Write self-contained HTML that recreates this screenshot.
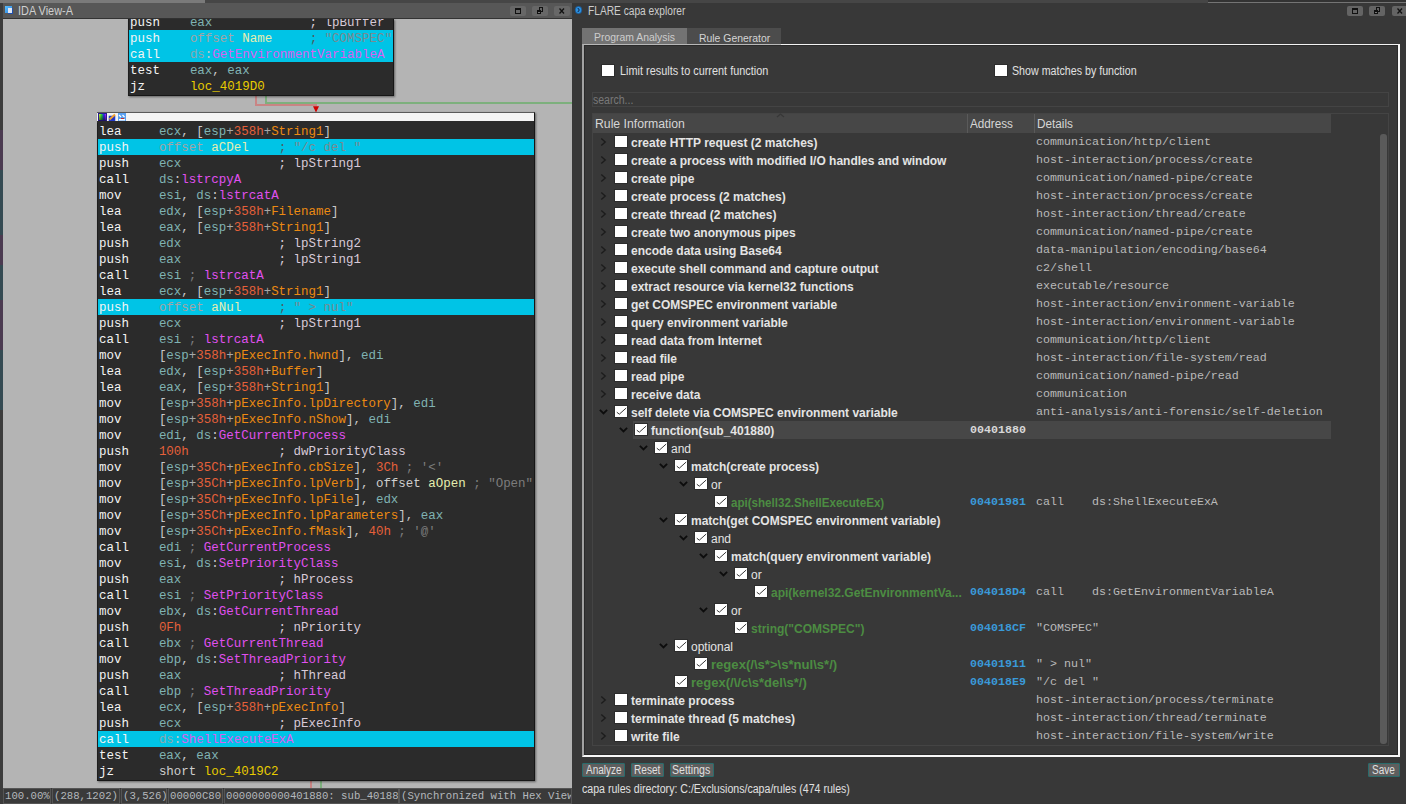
<!DOCTYPE html>
<html><head><meta charset="utf-8"><title>IDA capa explorer</title>
<style>
*{margin:0;padding:0;box-sizing:border-box}
html,body{width:1406px;height:804px;overflow:hidden;background:#3a3a3a;position:relative}
body{font-family:"Liberation Sans",sans-serif}
.abs{position:absolute}
.mono{font-family:"Liberation Mono",monospace}
.code{border-left:1px solid #1e1e1e;position:absolute;font-family:"Liberation Mono",monospace;font-size:12.47px;line-height:16px;white-space:pre;background:#2b2b2b;overflow:hidden}
.code .r{height:16px;padding-left:1px;padding-top:3px;line-height:13px}
.code .r.hl{background:#00c4e6}
.ar{position:absolute;line-height:0}
.cb{position:absolute;width:12px;height:11px;line-height:0;box-shadow:0 0 0 1px #2c2c2c}
.ub{background:#fff}
.tb,.tn,.tg{position:absolute;font-size:12px;line-height:18px;white-space:pre;height:18px;padding-top:1px}
.tb{font-weight:bold;color:#e4e4e4}
.tn{color:#e4e4e4}
.tg{font-weight:bold;color:#4c8c42}
.ad{position:absolute;left:970px;font-family:"Liberation Mono",monospace;font-size:11.67px;line-height:18px;font-weight:bold;white-space:pre}
.aw{color:#d8d8d8}
.ab{color:#3a9ad9}
.dt{position:absolute;left:1036px;font-family:"Liberation Mono",monospace;font-size:11.67px;line-height:18px;color:#bababa;white-space:pre}
.sb{position:absolute;top:788px;height:16px;font-family:"Liberation Mono",monospace;font-size:10.67px;line-height:15px;color:#b4b8bc;white-space:pre;border:1px solid #555;overflow:hidden;padding-left:1px}
.btn{position:absolute;top:763px;height:14px;border:1px solid #2a6c6c;background:#5e5e5e;border-radius:1px}
.lab{height:14px;font-size:12px;line-height:14px;white-space:pre;transform-origin:0 0}
.tbtn{position:absolute;top:6px;width:16px;height:10px;background:#676767;border-radius:2px}
</style></head>
<body>

<!-- top strip -->
<div class="abs" style="left:0;top:0;width:1406px;height:3px;background:#464646"></div>
<div class="abs" style="left:0;top:0;width:205px;height:3px;background:#7a7a7a"></div>
<div class="abs" style="left:1208px;top:0;width:198px;height:3px;background:#333"></div><div class="abs" style="left:1208px;top:2px;width:198px;height:1px;background:#747474"></div>

<!-- IDA window -->
<div class="abs" style="left:0;top:3px;width:3px;height:801px;background:#3c3c3c"></div>
<div class="abs" style="left:0;top:130px;width:3px;height:40px;background:#4b3a50"></div>
<div class="abs" style="left:0;top:170px;width:3px;height:65px;background:#344a52"></div>
<div class="abs" style="left:0;top:235px;width:3px;height:30px;background:#4b3a50"></div>
<div class="abs" style="left:0;top:265px;width:3px;height:35px;background:#344a52"></div>
<div class="abs" style="left:0;top:300px;width:3px;height:50px;background:#4b3a50"></div>
<div class="abs" style="left:0;top:350px;width:3px;height:60px;background:#344a52"></div>
<div class="abs" style="left:3px;top:3px;width:569px;height:16px;background:#575757"></div>
<div class="abs" style="left:3px;top:18px;width:569px;height:1px;background:#333"></div>
<div class="abs" style="left:5px;top:6px;width:7px;height:7px;background:linear-gradient(135deg,#5ac0ff,#2a80e0)"></div><div class="abs" style="left:8px;top:8px;width:5px;height:6px;background:#dfe8f4;border-right:1px solid #2050b0;border-bottom:1px solid #2050b0"></div>
<div class="abs lab" style="left:18.4px;top:4px;color:#d0d0d0;font-size:12px;transform:scaleX(0.9080);">IDA View-A</div>
<div class="tbtn" style="left:510px"><svg width="16" height="10" style="display:block"><rect x="5.5" y="2.5" width="5" height="5" fill="none" stroke="#111" stroke-width="1"/><rect x="5" y="2" width="6" height="2" fill="#111"/></svg></div>
<div class="tbtn" style="left:532px"><svg width="16" height="10" style="display:block"><rect x="7.5" y="1.5" width="3" height="4" fill="none" stroke="#111" stroke-width="1"/><rect x="5" y="4" width="4" height="4" fill="#111"/><rect x="6" y="6" width="2" height="1" fill="#777"/></svg></div>
<div class="tbtn" style="left:554px"><svg width="16" height="10" style="display:block"><path d="M5.5 2.5 L10 7.5 M10 2.5 L5.5 7.5" stroke="#111" stroke-width="1.3"/></svg></div>

<div class="abs" style="left:3px;top:19px;width:569px;height:769px;background:#b4b4b4;overflow:hidden">
</div>
<!-- edges -->
<div class="abs" style="left:255px;top:95px;width:2px;height:10px;background:#c98484"></div>
<div class="abs" style="left:255px;top:104px;width:62px;height:2px;background:#c98484"></div>
<div class="abs" style="left:265px;top:95px;width:2px;height:8px;background:#7db07d"></div>
<div class="abs" style="left:265px;top:102px;width:307px;height:2px;background:#7db07d"></div>
<svg class="abs" style="left:313px;top:105px" width="6" height="8"><path d="M0 1.2 L6 1.2 L3 7.5 Z" fill="#d00000"/></svg>
<div class="abs" style="left:310px;top:781px;width:2px;height:7px;background:#c98484"></div>
<div class="abs" style="left:320px;top:781px;width:2px;height:7px;background:#7db07d"></div>

<!-- upper block -->
<div class="code" style="left:128px;top:19px;width:266px;height:77px;border-right:1px solid #161616;border-bottom:1px solid #161616;box-shadow:1px 1px 2px rgba(0,0,0,0.45)"><div style="position:absolute;left:0;top:-5px;width:265px"><div class="r"><span style="color:#f4f4f4">push</span>    <span style="color:#80b3b3">eax</span>             <span style="color:#d8cad8">; lpBuffer</span></div><div class="r hl"><span style="color:#f4f4f4">push</span>    <span style="color:#a4a4a4">offset </span><span style="color:#e6eeb0">Name</span>     <span style="color:#4a5a60">; </span><span style="color:#7a8a90">"COMSPEC"</span></div><div class="r hl"><span style="color:#f4f4f4">call</span>    <span style="color:#8aa8b0">ds</span><span style="color:#c8c8c8">:</span><span style="color:#d860f0">GetEnvironmentVariableA</span></div><div class="r"><span style="color:#f4f4f4">test</span>    <span style="color:#80b3b3">eax</span><span style="color:#c8c8c8">, </span><span style="color:#80b3b3">eax</span></div><div class="r"><span style="color:#f4f4f4">jz</span>      <span style="color:#e8cc00">loc_4019D0</span></div></div></div>

<!-- lower block -->
<div class="abs" style="left:97px;top:112px;width:438px;height:669px;background:#2b2b2b;border-top:1px solid #5a5a5a;border-right:1px solid #161616;border-bottom:1px solid #161616;box-shadow:1px 1px 2px rgba(0,0,0,0.45)"></div>
<div class="abs" style="left:97px;top:113px;width:437px;height:8px;background:#f4f4f4"></div>
<svg class="abs" style="left:98px;top:113px" width="30" height="8">
<defs><linearGradient id="sp" x1="0" x2="1" y1="0" y2="0"><stop offset="0" stop-color="#ffff40"/><stop offset="0.35" stop-color="#30e030"/><stop offset="0.7" stop-color="#2020ff"/><stop offset="1" stop-color="#ff30ff"/></linearGradient>
<linearGradient id="dk" x1="0" x2="0" y1="0" y2="1"><stop offset="0" stop-color="#000" stop-opacity="0"/><stop offset="1" stop-color="#000" stop-opacity="0.55"/></linearGradient></defs>
<rect x="0.5" y="0.5" width="8" height="7" fill="url(#sp)" stroke="#2a1a90" stroke-width="1"/><rect x="1" y="1" width="7" height="6.5" fill="url(#dk)"/>
<rect x="11" y="3" width="6" height="5" fill="#1f30c8" stroke="#3050d0" stroke-width="0.6"/><path d="M11.5 6.5 L17 1.5" stroke="#f0a030" stroke-width="2"/>
<rect x="20" y="0" width="8" height="8" fill="#5aa0f0"/><path d="M21 2 L23 4 M24.5 2 L26.5 4" stroke="#fff" stroke-width="1.2"/><rect x="21" y="6" width="6" height="1.5" fill="#fff"/><rect x="23" y="5" width="3" height="1" fill="#c03030"/>
</svg>
<div class="code" style="left:97px;top:123px;width:437px;height:657px"><div class="r"><span style="color:#f4f4f4">lea</span>     <span style="color:#80b3b3">ecx</span><span style="color:#c8c8c8">, </span><span style="color:#c8c8c8">[</span><span style="color:#80b3b3">esp</span><span style="color:#a8a8a8">+</span><span style="color:#e5603a">358h</span><span style="color:#a8a8a8">+</span><span style="color:#ec8a12">String1</span><span style="color:#c8c8c8">]</span></div><div class="r hl"><span style="color:#f4f4f4">push</span>    <span style="color:#a4a4a4">offset </span><span style="color:#e6eeb0">aCDel</span>    <span style="color:#4a5a60">; </span><span style="color:#7a8a90">"/c del "</span></div><div class="r"><span style="color:#f4f4f4">push</span>    <span style="color:#80b3b3">ecx</span>             <span style="color:#d8cad8">; lpString1</span></div><div class="r"><span style="color:#f4f4f4">call</span>    <span style="color:#80b3b3">ds</span><span style="color:#c8c8c8">:</span><span style="color:#e050f0">lstrcpyA</span></div><div class="r"><span style="color:#f4f4f4">mov</span>     <span style="color:#80b3b3">esi</span><span style="color:#c8c8c8">, </span><span style="color:#80b3b3">ds</span><span style="color:#c8c8c8">:</span><span style="color:#e050f0">lstrcatA</span></div><div class="r"><span style="color:#f4f4f4">lea</span>     <span style="color:#80b3b3">edx</span><span style="color:#c8c8c8">, </span><span style="color:#c8c8c8">[</span><span style="color:#80b3b3">esp</span><span style="color:#a8a8a8">+</span><span style="color:#e5603a">358h</span><span style="color:#a8a8a8">+</span><span style="color:#ec8a12">Filename</span><span style="color:#c8c8c8">]</span></div><div class="r"><span style="color:#f4f4f4">lea</span>     <span style="color:#80b3b3">eax</span><span style="color:#c8c8c8">, </span><span style="color:#c8c8c8">[</span><span style="color:#80b3b3">esp</span><span style="color:#a8a8a8">+</span><span style="color:#e5603a">358h</span><span style="color:#a8a8a8">+</span><span style="color:#ec8a12">String1</span><span style="color:#c8c8c8">]</span></div><div class="r"><span style="color:#f4f4f4">push</span>    <span style="color:#80b3b3">edx</span>             <span style="color:#d8cad8">; lpString2</span></div><div class="r"><span style="color:#f4f4f4">push</span>    <span style="color:#80b3b3">eax</span>             <span style="color:#d8cad8">; lpString1</span></div><div class="r"><span style="color:#f4f4f4">call</span>    <span style="color:#80b3b3">esi</span><span style="color:#7c7c7c"> ; </span><span style="color:#e050f0">lstrcatA</span></div><div class="r"><span style="color:#f4f4f4">lea</span>     <span style="color:#80b3b3">ecx</span><span style="color:#c8c8c8">, </span><span style="color:#c8c8c8">[</span><span style="color:#80b3b3">esp</span><span style="color:#a8a8a8">+</span><span style="color:#e5603a">358h</span><span style="color:#a8a8a8">+</span><span style="color:#ec8a12">String1</span><span style="color:#c8c8c8">]</span></div><div class="r hl"><span style="color:#f4f4f4">push</span>    <span style="color:#a4a4a4">offset </span><span style="color:#e6eeb0">aNul</span>     <span style="color:#4a5a60">; </span><span style="color:#7a8a90">" &gt; nul"</span></div><div class="r"><span style="color:#f4f4f4">push</span>    <span style="color:#80b3b3">ecx</span>             <span style="color:#d8cad8">; lpString1</span></div><div class="r"><span style="color:#f4f4f4">call</span>    <span style="color:#80b3b3">esi</span><span style="color:#7c7c7c"> ; </span><span style="color:#e050f0">lstrcatA</span></div><div class="r"><span style="color:#f4f4f4">mov</span>     <span style="color:#c8c8c8">[</span><span style="color:#80b3b3">esp</span><span style="color:#a8a8a8">+</span><span style="color:#e5603a">358h</span><span style="color:#a8a8a8">+</span><span style="color:#ec8a12">pExecInfo.hwnd</span><span style="color:#c8c8c8">]</span><span style="color:#c8c8c8">, </span><span style="color:#80b3b3">edi</span></div><div class="r"><span style="color:#f4f4f4">lea</span>     <span style="color:#80b3b3">edx</span><span style="color:#c8c8c8">, </span><span style="color:#c8c8c8">[</span><span style="color:#80b3b3">esp</span><span style="color:#a8a8a8">+</span><span style="color:#e5603a">358h</span><span style="color:#a8a8a8">+</span><span style="color:#ec8a12">Buffer</span><span style="color:#c8c8c8">]</span></div><div class="r"><span style="color:#f4f4f4">lea</span>     <span style="color:#80b3b3">eax</span><span style="color:#c8c8c8">, </span><span style="color:#c8c8c8">[</span><span style="color:#80b3b3">esp</span><span style="color:#a8a8a8">+</span><span style="color:#e5603a">358h</span><span style="color:#a8a8a8">+</span><span style="color:#ec8a12">String1</span><span style="color:#c8c8c8">]</span></div><div class="r"><span style="color:#f4f4f4">mov</span>     <span style="color:#c8c8c8">[</span><span style="color:#80b3b3">esp</span><span style="color:#a8a8a8">+</span><span style="color:#e5603a">358h</span><span style="color:#a8a8a8">+</span><span style="color:#ec8a12">pExecInfo.lpDirectory</span><span style="color:#c8c8c8">]</span><span style="color:#c8c8c8">, </span><span style="color:#80b3b3">edi</span></div><div class="r"><span style="color:#f4f4f4">mov</span>     <span style="color:#c8c8c8">[</span><span style="color:#80b3b3">esp</span><span style="color:#a8a8a8">+</span><span style="color:#e5603a">358h</span><span style="color:#a8a8a8">+</span><span style="color:#ec8a12">pExecInfo.nShow</span><span style="color:#c8c8c8">]</span><span style="color:#c8c8c8">, </span><span style="color:#80b3b3">edi</span></div><div class="r"><span style="color:#f4f4f4">mov</span>     <span style="color:#80b3b3">edi</span><span style="color:#c8c8c8">, </span><span style="color:#80b3b3">ds</span><span style="color:#c8c8c8">:</span><span style="color:#e050f0">GetCurrentProcess</span></div><div class="r"><span style="color:#f4f4f4">push</span>    <span style="color:#e5603a">100h</span>            <span style="color:#d8cad8">; dwPriorityClass</span></div><div class="r"><span style="color:#f4f4f4">mov</span>     <span style="color:#c8c8c8">[</span><span style="color:#80b3b3">esp</span><span style="color:#a8a8a8">+</span><span style="color:#e5603a">35Ch</span><span style="color:#a8a8a8">+</span><span style="color:#ec8a12">pExecInfo.cbSize</span><span style="color:#c8c8c8">]</span><span style="color:#c8c8c8">, </span><span style="color:#e5603a">3Ch</span><span style="color:#7c7c7c"> ; '&lt;'</span></div><div class="r"><span style="color:#f4f4f4">mov</span>     <span style="color:#c8c8c8">[</span><span style="color:#80b3b3">esp</span><span style="color:#a8a8a8">+</span><span style="color:#e5603a">35Ch</span><span style="color:#a8a8a8">+</span><span style="color:#ec8a12">pExecInfo.lpVerb</span><span style="color:#c8c8c8">]</span><span style="color:#c8c8c8">, </span><span style="color:#cfcfcf">offset </span><span style="color:#e6eeb0">aOpen</span><span style="color:#7c7c7c"> ; "Open"</span></div><div class="r"><span style="color:#f4f4f4">mov</span>     <span style="color:#c8c8c8">[</span><span style="color:#80b3b3">esp</span><span style="color:#a8a8a8">+</span><span style="color:#e5603a">35Ch</span><span style="color:#a8a8a8">+</span><span style="color:#ec8a12">pExecInfo.lpFile</span><span style="color:#c8c8c8">]</span><span style="color:#c8c8c8">, </span><span style="color:#80b3b3">edx</span></div><div class="r"><span style="color:#f4f4f4">mov</span>     <span style="color:#c8c8c8">[</span><span style="color:#80b3b3">esp</span><span style="color:#a8a8a8">+</span><span style="color:#e5603a">35Ch</span><span style="color:#a8a8a8">+</span><span style="color:#ec8a12">pExecInfo.lpParameters</span><span style="color:#c8c8c8">]</span><span style="color:#c8c8c8">, </span><span style="color:#80b3b3">eax</span></div><div class="r"><span style="color:#f4f4f4">mov</span>     <span style="color:#c8c8c8">[</span><span style="color:#80b3b3">esp</span><span style="color:#a8a8a8">+</span><span style="color:#e5603a">35Ch</span><span style="color:#a8a8a8">+</span><span style="color:#ec8a12">pExecInfo.fMask</span><span style="color:#c8c8c8">]</span><span style="color:#c8c8c8">, </span><span style="color:#e5603a">40h</span><span style="color:#7c7c7c"> ; '@'</span></div><div class="r"><span style="color:#f4f4f4">call</span>    <span style="color:#80b3b3">edi</span><span style="color:#7c7c7c"> ; </span><span style="color:#e050f0">GetCurrentProcess</span></div><div class="r"><span style="color:#f4f4f4">mov</span>     <span style="color:#80b3b3">esi</span><span style="color:#c8c8c8">, </span><span style="color:#80b3b3">ds</span><span style="color:#c8c8c8">:</span><span style="color:#e050f0">SetPriorityClass</span></div><div class="r"><span style="color:#f4f4f4">push</span>    <span style="color:#80b3b3">eax</span>             <span style="color:#d8cad8">; hProcess</span></div><div class="r"><span style="color:#f4f4f4">call</span>    <span style="color:#80b3b3">esi</span><span style="color:#7c7c7c"> ; </span><span style="color:#e050f0">SetPriorityClass</span></div><div class="r"><span style="color:#f4f4f4">mov</span>     <span style="color:#80b3b3">ebx</span><span style="color:#c8c8c8">, </span><span style="color:#80b3b3">ds</span><span style="color:#c8c8c8">:</span><span style="color:#e050f0">GetCurrentThread</span></div><div class="r"><span style="color:#f4f4f4">push</span>    <span style="color:#e5603a">0Fh</span>             <span style="color:#d8cad8">; nPriority</span></div><div class="r"><span style="color:#f4f4f4">call</span>    <span style="color:#80b3b3">ebx</span><span style="color:#7c7c7c"> ; </span><span style="color:#e050f0">GetCurrentThread</span></div><div class="r"><span style="color:#f4f4f4">mov</span>     <span style="color:#80b3b3">ebp</span><span style="color:#c8c8c8">, </span><span style="color:#80b3b3">ds</span><span style="color:#c8c8c8">:</span><span style="color:#e050f0">SetThreadPriority</span></div><div class="r"><span style="color:#f4f4f4">push</span>    <span style="color:#80b3b3">eax</span>             <span style="color:#d8cad8">; hThread</span></div><div class="r"><span style="color:#f4f4f4">call</span>    <span style="color:#80b3b3">ebp</span><span style="color:#7c7c7c"> ; </span><span style="color:#e050f0">SetThreadPriority</span></div><div class="r"><span style="color:#f4f4f4">lea</span>     <span style="color:#80b3b3">ecx</span><span style="color:#c8c8c8">, </span><span style="color:#c8c8c8">[</span><span style="color:#80b3b3">esp</span><span style="color:#a8a8a8">+</span><span style="color:#e5603a">358h</span><span style="color:#a8a8a8">+</span><span style="color:#ec8a12">pExecInfo</span><span style="color:#c8c8c8">]</span></div><div class="r"><span style="color:#f4f4f4">push</span>    <span style="color:#80b3b3">ecx</span>             <span style="color:#d8cad8">; pExecInfo</span></div><div class="r hl"><span style="color:#f4f4f4">call</span>    <span style="color:#8aa8b0">ds</span><span style="color:#c8c8c8">:</span><span style="color:#d860f0">ShellExecuteExA</span></div><div class="r"><span style="color:#f4f4f4">test</span>    <span style="color:#80b3b3">eax</span><span style="color:#c8c8c8">, </span><span style="color:#80b3b3">eax</span></div><div class="r"><span style="color:#f4f4f4">jz</span>      <span style="color:#cfcfcf">short </span><span style="color:#e8cc00">loc_4019C2</span></div></div>

<!-- status bar -->
<div class="abs" style="left:3px;top:788px;width:569px;height:16px;background:#3a3a3a"></div>
<div class="sb" style="left:3px;width:48px">100.00%</div>
<div class="sb" style="left:52px;width:68px">(288,1202)</div>
<div class="sb" style="left:121px;width:46px">(3,526)</div>
<div class="sb" style="left:168px;width:55px">00000C80</div>
<div class="sb" style="left:224px;width:175px">0000000000401880: sub_401880</div>
<div class="sb" style="left:399px;width:173px">(Synchronized with Hex View-1)</div>

<!-- capa -->
<div class="abs" style="left:572px;top:3px;width:834px;height:801px;background:#383838"></div>
<svg class="abs" style="left:574px;top:5px" width="10" height="11"><ellipse cx="4.5" cy="5" rx="3.4" ry="3.7" fill="#2a90e0" stroke="#1a4a80" stroke-width="0.7"/><path d="M3.8 3 L5.3 5 L3.8 7" stroke="#102040" stroke-width="1" fill="none"/></svg>
<div class="abs lab" style="left:588.4px;top:4px;color:#cccccc;font-size:12px;transform:scaleX(0.8485);">FLARE capa explorer</div>
<div class="tbtn" style="left:1347px;background:#646464"><svg width="16" height="10" style="display:block"><rect x="5.5" y="2.5" width="5" height="5" fill="none" stroke="#111" stroke-width="1"/><rect x="5" y="2" width="6" height="2" fill="#111"/></svg></div>
<div class="tbtn" style="left:1369px;background:#646464"><svg width="16" height="10" style="display:block"><rect x="7.5" y="1.5" width="3" height="4" fill="none" stroke="#111" stroke-width="1"/><rect x="5" y="4" width="4" height="4" fill="#111"/><rect x="6" y="6" width="2" height="1" fill="#777"/></svg></div>
<div class="tbtn" style="left:1392px;background:#646464"><svg width="16" height="10" style="display:block"><path d="M5.5 2.5 L10 7.5 M10 2.5 L5.5 7.5" stroke="#111" stroke-width="1.3"/></svg></div>

<div class="abs" style="left:582px;top:28px;width:105px;height:16px;background:#737373"></div>
<div class="abs lab" style="left:594.3px;top:30px;color:#cdcdcd;font-size:11px;transform:scaleX(0.9457);">Program Analysis</div>
<div class="abs" style="left:687px;top:28px;width:94px;height:16px;background:#4c4c4c"></div>
<div class="abs lab" style="left:698.6px;top:31px;color:#d4d4d4;font-size:11px;transform:scaleX(0.9460);">Rule Generator</div>

<div class="abs" style="left:582px;top:44px;width:818px;height:713px;border-style:solid;border-width:1px 2px 2px 2px;border-color:#b8b8b8 #f8f8f8 #f8f8f8 #a2a2a2;box-shadow:inset 1px 1px 0 #2a2a2a,inset -1px -1px 0 #2a2a2a"></div>
<div class="abs" style="left:781px;top:44px;width:619px;height:1px;background:#f2f2f2"></div>

<div class="cb ub" style="left:602px;top:65px"></div>
<div class="abs lab" style="left:619.8px;top:64px;color:#e0e0e0;font-size:12px;transform:scaleX(0.9076);">Limit results to current function</div>
<div class="cb ub" style="left:995px;top:65px"></div>
<div class="abs lab" style="left:1011.9px;top:64px;color:#e0e0e0;font-size:12px;transform:scaleX(0.8894);">Show matches by function</div>

<div class="abs" style="left:592px;top:92px;width:797px;height:15px;border:1px solid #444"></div>
<div class="abs lab" style="left:593.4px;top:93px;color:#787878;font-size:12px;transform:scaleX(0.8772);">search...</div>

<div class="abs" style="left:592px;top:113px;width:797px;height:633px;border:1px solid #444"></div>
<div class="abs" style="left:593px;top:114px;width:738px;height:19px;background:#474747"></div>
<svg class="abs" style="left:776px;top:113px" width="9" height="5"><path d="M1 4 L4.5 1 L8 4" stroke="#383838" stroke-width="1.3" fill="none"/></svg>
<div class="abs" style="left:967px;top:114px;width:1px;height:19px;background:#5a5a5a"></div>
<div class="abs" style="left:1034px;top:114px;width:1px;height:19px;background:#5a5a5a"></div>
<div class="abs lab" style="left:594.9px;top:117px;color:#d6d6d6;font-size:12px;transform:scaleX(1.0201);">Rule Information</div>
<div class="abs lab" style="left:969.5px;top:117px;color:#d6d6d6;font-size:12px;transform:scaleX(0.9760);">Address</div>
<div class="abs lab" style="left:1036.6px;top:117px;color:#d6d6d6;font-size:12px;transform:scaleX(0.9807);">Details</div>
<div class="abs" style="left:1380px;top:134px;width:7px;height:610px;background:#5a5a5a;border-radius:3px"></div>

<div class="ar" style="left:599px;top:137px"><svg width="8" height="10" viewBox="0 0 8 10"><path d="M2.3 1.5 L6.2 5 L2.3 8.5" stroke="#1c1c1c" stroke-width="1.4" fill="none"/></svg></div><div class="cb ub" style="left:615px;top:136px"></div><div class="tb" style="left:631px;top:133px">create HTTP request (2 matches)</div><div class="dt" style="top:133px">communication/http/client</div>
<div class="ar" style="left:599px;top:155px"><svg width="8" height="10" viewBox="0 0 8 10"><path d="M2.3 1.5 L6.2 5 L2.3 8.5" stroke="#1c1c1c" stroke-width="1.4" fill="none"/></svg></div><div class="cb ub" style="left:615px;top:154px"></div><div class="tb" style="left:631px;top:151px">create a process with modified I/O handles and window</div><div class="dt" style="top:151px">host-interaction/process/create</div>
<div class="ar" style="left:599px;top:173px"><svg width="8" height="10" viewBox="0 0 8 10"><path d="M2.3 1.5 L6.2 5 L2.3 8.5" stroke="#1c1c1c" stroke-width="1.4" fill="none"/></svg></div><div class="cb ub" style="left:615px;top:172px"></div><div class="tb" style="left:631px;top:169px">create pipe</div><div class="dt" style="top:169px">communication/named-pipe/create</div>
<div class="ar" style="left:599px;top:191px"><svg width="8" height="10" viewBox="0 0 8 10"><path d="M2.3 1.5 L6.2 5 L2.3 8.5" stroke="#1c1c1c" stroke-width="1.4" fill="none"/></svg></div><div class="cb ub" style="left:615px;top:190px"></div><div class="tb" style="left:631px;top:187px">create process (2 matches)</div><div class="dt" style="top:187px">host-interaction/process/create</div>
<div class="ar" style="left:599px;top:209px"><svg width="8" height="10" viewBox="0 0 8 10"><path d="M2.3 1.5 L6.2 5 L2.3 8.5" stroke="#1c1c1c" stroke-width="1.4" fill="none"/></svg></div><div class="cb ub" style="left:615px;top:208px"></div><div class="tb" style="left:631px;top:205px">create thread (2 matches)</div><div class="dt" style="top:205px">host-interaction/thread/create</div>
<div class="ar" style="left:599px;top:227px"><svg width="8" height="10" viewBox="0 0 8 10"><path d="M2.3 1.5 L6.2 5 L2.3 8.5" stroke="#1c1c1c" stroke-width="1.4" fill="none"/></svg></div><div class="cb ub" style="left:615px;top:226px"></div><div class="tb" style="left:631px;top:223px">create two anonymous pipes</div><div class="dt" style="top:223px">communication/named-pipe/create</div>
<div class="ar" style="left:599px;top:245px"><svg width="8" height="10" viewBox="0 0 8 10"><path d="M2.3 1.5 L6.2 5 L2.3 8.5" stroke="#1c1c1c" stroke-width="1.4" fill="none"/></svg></div><div class="cb ub" style="left:615px;top:244px"></div><div class="tb" style="left:631px;top:241px">encode data using Base64</div><div class="dt" style="top:241px">data-manipulation/encoding/base64</div>
<div class="ar" style="left:599px;top:263px"><svg width="8" height="10" viewBox="0 0 8 10"><path d="M2.3 1.5 L6.2 5 L2.3 8.5" stroke="#1c1c1c" stroke-width="1.4" fill="none"/></svg></div><div class="cb ub" style="left:615px;top:262px"></div><div class="tb" style="left:631px;top:259px">execute shell command and capture output</div><div class="dt" style="top:259px">c2/shell</div>
<div class="ar" style="left:599px;top:281px"><svg width="8" height="10" viewBox="0 0 8 10"><path d="M2.3 1.5 L6.2 5 L2.3 8.5" stroke="#1c1c1c" stroke-width="1.4" fill="none"/></svg></div><div class="cb ub" style="left:615px;top:280px"></div><div class="tb" style="left:631px;top:277px">extract resource via kernel32 functions</div><div class="dt" style="top:277px">executable/resource</div>
<div class="ar" style="left:599px;top:299px"><svg width="8" height="10" viewBox="0 0 8 10"><path d="M2.3 1.5 L6.2 5 L2.3 8.5" stroke="#1c1c1c" stroke-width="1.4" fill="none"/></svg></div><div class="cb ub" style="left:615px;top:298px"></div><div class="tb" style="left:631px;top:295px">get COMSPEC environment variable</div><div class="dt" style="top:295px">host-interaction/environment-variable</div>
<div class="ar" style="left:599px;top:317px"><svg width="8" height="10" viewBox="0 0 8 10"><path d="M2.3 1.5 L6.2 5 L2.3 8.5" stroke="#1c1c1c" stroke-width="1.4" fill="none"/></svg></div><div class="cb ub" style="left:615px;top:316px"></div><div class="tb" style="left:631px;top:313px">query environment variable</div><div class="dt" style="top:313px">host-interaction/environment-variable</div>
<div class="ar" style="left:599px;top:335px"><svg width="8" height="10" viewBox="0 0 8 10"><path d="M2.3 1.5 L6.2 5 L2.3 8.5" stroke="#1c1c1c" stroke-width="1.4" fill="none"/></svg></div><div class="cb ub" style="left:615px;top:334px"></div><div class="tb" style="left:631px;top:331px">read data from Internet</div><div class="dt" style="top:331px">communication/http/client</div>
<div class="ar" style="left:599px;top:353px"><svg width="8" height="10" viewBox="0 0 8 10"><path d="M2.3 1.5 L6.2 5 L2.3 8.5" stroke="#1c1c1c" stroke-width="1.4" fill="none"/></svg></div><div class="cb ub" style="left:615px;top:352px"></div><div class="tb" style="left:631px;top:349px">read file</div><div class="dt" style="top:349px">host-interaction/file-system/read</div>
<div class="ar" style="left:599px;top:371px"><svg width="8" height="10" viewBox="0 0 8 10"><path d="M2.3 1.5 L6.2 5 L2.3 8.5" stroke="#1c1c1c" stroke-width="1.4" fill="none"/></svg></div><div class="cb ub" style="left:615px;top:370px"></div><div class="tb" style="left:631px;top:367px">read pipe</div><div class="dt" style="top:367px">communication/named-pipe/read</div>
<div class="ar" style="left:599px;top:389px"><svg width="8" height="10" viewBox="0 0 8 10"><path d="M2.3 1.5 L6.2 5 L2.3 8.5" stroke="#1c1c1c" stroke-width="1.4" fill="none"/></svg></div><div class="cb ub" style="left:615px;top:388px"></div><div class="tb" style="left:631px;top:385px">receive data</div><div class="dt" style="top:385px">communication</div>
<div class="ar" style="left:599px;top:409px"><svg width="10" height="8" viewBox="0 0 10 8"><path d="M0.9 0.8 L4.5 4.4 L8.1 0.8" stroke="#0c0c0c" stroke-width="1.8" fill="none"/></svg></div><div class="cb" style="left:615px;top:406px"><svg width="12" height="11" viewBox="0 0 12 11"><rect x="0" y="0" width="12" height="11" fill="#fff"/><path d="M1.8 6.2 L4.3 8.2 L11.2 2.0" stroke="#3a3a3a" stroke-width="1" fill="none"/></svg></div><div class="tb" style="left:631px;top:403px">self delete via COMSPEC environment variable</div><div class="dt" style="top:403px">anti-analysis/anti-forensic/self-deletion</div>
<div style="position:absolute;left:633px;top:421px;width:698px;height:18px;background:#474747"></div><div class="ar" style="left:619px;top:427px"><svg width="10" height="8" viewBox="0 0 10 8"><path d="M0.9 0.8 L4.5 4.4 L8.1 0.8" stroke="#0c0c0c" stroke-width="1.8" fill="none"/></svg></div><div class="cb" style="left:635px;top:424px"><svg width="12" height="11" viewBox="0 0 12 11"><rect x="0" y="0" width="12" height="11" fill="#fff"/><path d="M1.8 6.2 L4.3 8.2 L11.2 2.0" stroke="#3a3a3a" stroke-width="1" fill="none"/></svg></div><div class="tb" style="left:651px;top:421px">function(sub_401880)</div><div class="ad aw" style="top:421px">00401880</div>
<div class="ar" style="left:639px;top:445px"><svg width="10" height="8" viewBox="0 0 10 8"><path d="M0.9 0.8 L4.5 4.4 L8.1 0.8" stroke="#0c0c0c" stroke-width="1.8" fill="none"/></svg></div><div class="cb" style="left:655px;top:442px"><svg width="12" height="11" viewBox="0 0 12 11"><rect x="0" y="0" width="12" height="11" fill="#fff"/><path d="M1.8 6.2 L4.3 8.2 L11.2 2.0" stroke="#3a3a3a" stroke-width="1" fill="none"/></svg></div><div class="tn" style="left:671px;top:439px">and</div>
<div class="ar" style="left:659px;top:463px"><svg width="10" height="8" viewBox="0 0 10 8"><path d="M0.9 0.8 L4.5 4.4 L8.1 0.8" stroke="#0c0c0c" stroke-width="1.8" fill="none"/></svg></div><div class="cb" style="left:675px;top:460px"><svg width="12" height="11" viewBox="0 0 12 11"><rect x="0" y="0" width="12" height="11" fill="#fff"/><path d="M1.8 6.2 L4.3 8.2 L11.2 2.0" stroke="#3a3a3a" stroke-width="1" fill="none"/></svg></div><div class="tb" style="left:691px;top:457px">match(create process)</div>
<div class="ar" style="left:679px;top:481px"><svg width="10" height="8" viewBox="0 0 10 8"><path d="M0.9 0.8 L4.5 4.4 L8.1 0.8" stroke="#0c0c0c" stroke-width="1.8" fill="none"/></svg></div><div class="cb" style="left:695px;top:478px"><svg width="12" height="11" viewBox="0 0 12 11"><rect x="0" y="0" width="12" height="11" fill="#fff"/><path d="M1.8 6.2 L4.3 8.2 L11.2 2.0" stroke="#3a3a3a" stroke-width="1" fill="none"/></svg></div><div class="tn" style="left:711px;top:475px">or</div>
<div class="cb" style="left:715px;top:496px"><svg width="12" height="11" viewBox="0 0 12 11"><rect x="0" y="0" width="12" height="11" fill="#fff"/><path d="M1.8 6.2 L4.3 8.2 L11.2 2.0" stroke="#3a3a3a" stroke-width="1" fill="none"/></svg></div><div class="tg" style="left:731px;top:493px;transform-origin:0 0;transform:scaleX(0.965)">api(shell32.ShellExecuteEx)</div><div class="ad ab" style="top:493px">00401981</div><div class="dt" style="top:493px">call    ds:ShellExecuteExA</div>
<div class="ar" style="left:659px;top:517px"><svg width="10" height="8" viewBox="0 0 10 8"><path d="M0.9 0.8 L4.5 4.4 L8.1 0.8" stroke="#0c0c0c" stroke-width="1.8" fill="none"/></svg></div><div class="cb" style="left:675px;top:514px"><svg width="12" height="11" viewBox="0 0 12 11"><rect x="0" y="0" width="12" height="11" fill="#fff"/><path d="M1.8 6.2 L4.3 8.2 L11.2 2.0" stroke="#3a3a3a" stroke-width="1" fill="none"/></svg></div><div class="tb" style="left:691px;top:511px">match(get COMSPEC environment variable)</div>
<div class="ar" style="left:679px;top:535px"><svg width="10" height="8" viewBox="0 0 10 8"><path d="M0.9 0.8 L4.5 4.4 L8.1 0.8" stroke="#0c0c0c" stroke-width="1.8" fill="none"/></svg></div><div class="cb" style="left:695px;top:532px"><svg width="12" height="11" viewBox="0 0 12 11"><rect x="0" y="0" width="12" height="11" fill="#fff"/><path d="M1.8 6.2 L4.3 8.2 L11.2 2.0" stroke="#3a3a3a" stroke-width="1" fill="none"/></svg></div><div class="tn" style="left:711px;top:529px">and</div>
<div class="ar" style="left:699px;top:553px"><svg width="10" height="8" viewBox="0 0 10 8"><path d="M0.9 0.8 L4.5 4.4 L8.1 0.8" stroke="#0c0c0c" stroke-width="1.8" fill="none"/></svg></div><div class="cb" style="left:715px;top:550px"><svg width="12" height="11" viewBox="0 0 12 11"><rect x="0" y="0" width="12" height="11" fill="#fff"/><path d="M1.8 6.2 L4.3 8.2 L11.2 2.0" stroke="#3a3a3a" stroke-width="1" fill="none"/></svg></div><div class="tb" style="left:731px;top:547px">match(query environment variable)</div>
<div class="ar" style="left:719px;top:571px"><svg width="10" height="8" viewBox="0 0 10 8"><path d="M0.9 0.8 L4.5 4.4 L8.1 0.8" stroke="#0c0c0c" stroke-width="1.8" fill="none"/></svg></div><div class="cb" style="left:735px;top:568px"><svg width="12" height="11" viewBox="0 0 12 11"><rect x="0" y="0" width="12" height="11" fill="#fff"/><path d="M1.8 6.2 L4.3 8.2 L11.2 2.0" stroke="#3a3a3a" stroke-width="1" fill="none"/></svg></div><div class="tn" style="left:751px;top:565px">or</div>
<div class="cb" style="left:755px;top:586px"><svg width="12" height="11" viewBox="0 0 12 11"><rect x="0" y="0" width="12" height="11" fill="#fff"/><path d="M1.8 6.2 L4.3 8.2 L11.2 2.0" stroke="#3a3a3a" stroke-width="1" fill="none"/></svg></div><div class="tg" style="left:771px;top:583px">api(kernel32.GetEnvironmentVa...</div><div class="ad ab" style="top:583px">004018D4</div><div class="dt" style="top:583px">call    ds:GetEnvironmentVariableA</div>
<div class="ar" style="left:699px;top:607px"><svg width="10" height="8" viewBox="0 0 10 8"><path d="M0.9 0.8 L4.5 4.4 L8.1 0.8" stroke="#0c0c0c" stroke-width="1.8" fill="none"/></svg></div><div class="cb" style="left:715px;top:604px"><svg width="12" height="11" viewBox="0 0 12 11"><rect x="0" y="0" width="12" height="11" fill="#fff"/><path d="M1.8 6.2 L4.3 8.2 L11.2 2.0" stroke="#3a3a3a" stroke-width="1" fill="none"/></svg></div><div class="tn" style="left:731px;top:601px">or</div>
<div class="cb" style="left:735px;top:622px"><svg width="12" height="11" viewBox="0 0 12 11"><rect x="0" y="0" width="12" height="11" fill="#fff"/><path d="M1.8 6.2 L4.3 8.2 L11.2 2.0" stroke="#3a3a3a" stroke-width="1" fill="none"/></svg></div><div class="tg" style="left:751px;top:619px">string("COMSPEC")</div><div class="ad ab" style="top:619px">004018CF</div><div class="dt" style="top:619px">"COMSPEC"</div>
<div class="ar" style="left:659px;top:643px"><svg width="10" height="8" viewBox="0 0 10 8"><path d="M0.9 0.8 L4.5 4.4 L8.1 0.8" stroke="#0c0c0c" stroke-width="1.8" fill="none"/></svg></div><div class="cb" style="left:675px;top:640px"><svg width="12" height="11" viewBox="0 0 12 11"><rect x="0" y="0" width="12" height="11" fill="#fff"/><path d="M1.8 6.2 L4.3 8.2 L11.2 2.0" stroke="#3a3a3a" stroke-width="1" fill="none"/></svg></div><div class="tn" style="left:691px;top:637px">optional</div>
<div class="cb" style="left:695px;top:658px"><svg width="12" height="11" viewBox="0 0 12 11"><rect x="0" y="0" width="12" height="11" fill="#fff"/><path d="M1.8 6.2 L4.3 8.2 L11.2 2.0" stroke="#3a3a3a" stroke-width="1" fill="none"/></svg></div><div class="tg" style="left:711px;top:655px;transform-origin:0 0;transform:scaleX(1.09)">regex(/\s*&gt;\s*nul\s*/)</div><div class="ad ab" style="top:655px">00401911</div><div class="dt" style="top:655px">" &gt; nul"</div>
<div class="cb" style="left:675px;top:676px"><svg width="12" height="11" viewBox="0 0 12 11"><rect x="0" y="0" width="12" height="11" fill="#fff"/><path d="M1.8 6.2 L4.3 8.2 L11.2 2.0" stroke="#3a3a3a" stroke-width="1" fill="none"/></svg></div><div class="tg" style="left:691px;top:673px;transform-origin:0 0;transform:scaleX(1.085)">regex(/\/c\s*del\s*/)</div><div class="ad ab" style="top:673px">004018E9</div><div class="dt" style="top:673px">"/c del "</div>
<div class="ar" style="left:599px;top:695px"><svg width="8" height="10" viewBox="0 0 8 10"><path d="M2.3 1.5 L6.2 5 L2.3 8.5" stroke="#1c1c1c" stroke-width="1.4" fill="none"/></svg></div><div class="cb ub" style="left:615px;top:694px"></div><div class="tb" style="left:631px;top:691px">terminate process</div><div class="dt" style="top:691px">host-interaction/process/terminate</div>
<div class="ar" style="left:599px;top:713px"><svg width="8" height="10" viewBox="0 0 8 10"><path d="M2.3 1.5 L6.2 5 L2.3 8.5" stroke="#1c1c1c" stroke-width="1.4" fill="none"/></svg></div><div class="cb ub" style="left:615px;top:712px"></div><div class="tb" style="left:631px;top:709px">terminate thread (5 matches)</div><div class="dt" style="top:709px">host-interaction/thread/terminate</div>
<div class="ar" style="left:599px;top:731px"><svg width="8" height="10" viewBox="0 0 8 10"><path d="M2.3 1.5 L6.2 5 L2.3 8.5" stroke="#1c1c1c" stroke-width="1.4" fill="none"/></svg></div><div class="cb ub" style="left:615px;top:730px"></div><div class="tb" style="left:631px;top:727px">write file</div><div class="dt" style="top:727px">host-interaction/file-system/write</div>

<div class="btn" style="left:582px;width:43px"></div><div class="abs lab" style="left:585.9px;top:763px;color:#e0e0e0;font-size:12px;transform:scaleX(0.8321);">Analyze</div>
<div class="btn" style="left:631px;width:33px"></div><div class="abs lab" style="left:634.0px;top:763px;color:#e0e0e0;font-size:12px;transform:scaleX(0.8432);">Reset</div>
<div class="btn" style="left:670px;width:44px"></div><div class="abs lab" style="left:672.4px;top:763px;color:#e0e0e0;font-size:12px;transform:scaleX(0.8806);">Settings</div>
<div class="btn" style="left:1368px;width:32px"></div><div class="abs lab" style="left:1372.3px;top:763px;color:#e0e0e0;font-size:12px;transform:scaleX(0.8346);">Save</div>
<div class="abs lab" style="left:582.4px;top:782px;color:#e0e0e0;font-size:12px;transform:scaleX(0.8827);">capa rules directory: C:/Exclusions/capa/rules (474 rules)</div>

</body></html>
